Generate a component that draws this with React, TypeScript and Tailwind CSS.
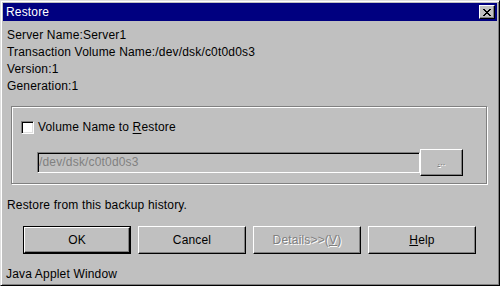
import React from 'react'

const font = { fontFamily: '"Liberation Sans", Arial, sans-serif' }

const raised =
  'border border-t-white border-l-white border-r-black border-b-black shadow-[inset_-1px_-1px_#808080]'

function Button({
  children,
  disabled,
  isDefault,
}: {
  children: React.ReactNode
  disabled?: boolean
  isDefault?: boolean
}) {
  if (isDefault) {
    return (
      <div className="w-[108px] h-[28px] border border-black">
        <div className={`w-full h-full flex items-center justify-center ${raised}`}>{children}</div>
      </div>
    )
  }
  return (
    <div
      className={`w-[108px] h-[28px] flex items-center justify-center ${raised} ${
        disabled ? 'text-[#808080] [text-shadow:1px_1px_#fff]' : ''
      }`}
    >
      {children}
    </div>
  )
}

function CloseIcon() {
  return (
    <svg width="8" height="7" viewBox="0 0 8 7" shapeRendering="crispEdges">
      <path
        fill="#000"
        d="M0 0h2v1H0zM6 0h2v1H6zM1 1h2v1H1zM5 1h2v1H5zM2 2h4v1H2zM3 3h2v1H3zM2 4h4v1H2zM1 5h2v1H1zM5 5h2v1H5zM0 6h2v1H0zM6 6h2v1H6z"
      />
    </svg>
  )
}

export default function App() {
  return (
    <div style={font} className="w-[500px] h-[286px] bg-[#c0c0c0] text-black text-[12px] leading-[17px] tracking-[0.17px]">
      <div className="w-full h-full p-[2px] border border-t-[#dfdfdf] border-l-[#dfdfdf] border-r-black border-b-black shadow-[inset_1px_1px_#fff,inset_-1px_-1px_#808080] flex flex-col">
        {/* Title bar */}
        <div className="h-[18px] bg-[#000080] flex items-center justify-between pl-[3px] pr-[2px]">
          <span className="text-white leading-[18px]">Restore</span>
          <div className={`w-[16px] h-[14px] bg-[#c0c0c0] flex items-center justify-center ${raised}`}>
            <CloseIcon />
          </div>
        </div>

        {/* Info */}
        <div className="pl-[4px] pt-[6px]">
          <div>Server Name:Server1</div>
          <div>Transaction Volume Name:/dev/dsk/c0t0d0s3</div>
          <div>Version:1</div>
          <div>Generation:1</div>
        </div>

        {/* Group box */}
        <div className="ml-[8px] mt-[11px] w-[476px] h-[79px] border border-[#808080] shadow-[inset_1px_1px_#fff,1px_1px_#fff] pl-[9px] pt-[14px]">
          <div className="flex items-center h-[13px]">
            <div className="w-[13px] h-[13px] bg-white border border-t-[#808080] border-l-[#808080] border-r-white border-b-white shadow-[inset_1px_1px_#000,inset_-1px_-1px_#dfdfdf]" />
            <span className="ml-[4px]">
              Volume Name to <span className="underline underline-offset-2">R</span>estore
            </span>
          </div>
          <div className="flex items-center mt-[15px] ml-[16px]">
            <div className="w-[383px] h-[21px] border border-t-[#808080] border-l-[#808080] border-r-white border-b-white shadow-[inset_1px_1px_#000,inset_-1px_-1px_#c0c0c0] flex items-center pl-[1px] text-[#808080]">
              /dev/dsk/c0t0d0s3
            </div>
            <div className={`w-[43px] h-[27px] flex items-center justify-center text-[#808080] [text-shadow:1px_1px_#fff] text-[9px] ${raised}`}>
              <span className="underline">.</span>..
            </div>
          </div>
        </div>

        <div className="pl-[4px] mt-[13px]">Restore from this backup history.</div>

        {/* Buttons */}
        <div className="flex gap-[7px] ml-[20px] mt-[12px]">
          <Button isDefault>OK</Button>
          <Button>Cancel</Button>
          <Button disabled>
            Details&gt;&gt;(<span className="underline">V</span>)
          </Button>
          <Button>
            <span className="underline">H</span>elp
          </Button>
        </div>

        <div className="pl-[3px] mt-[12px]">Java Applet Window</div>
      </div>
    </div>
  )
}
